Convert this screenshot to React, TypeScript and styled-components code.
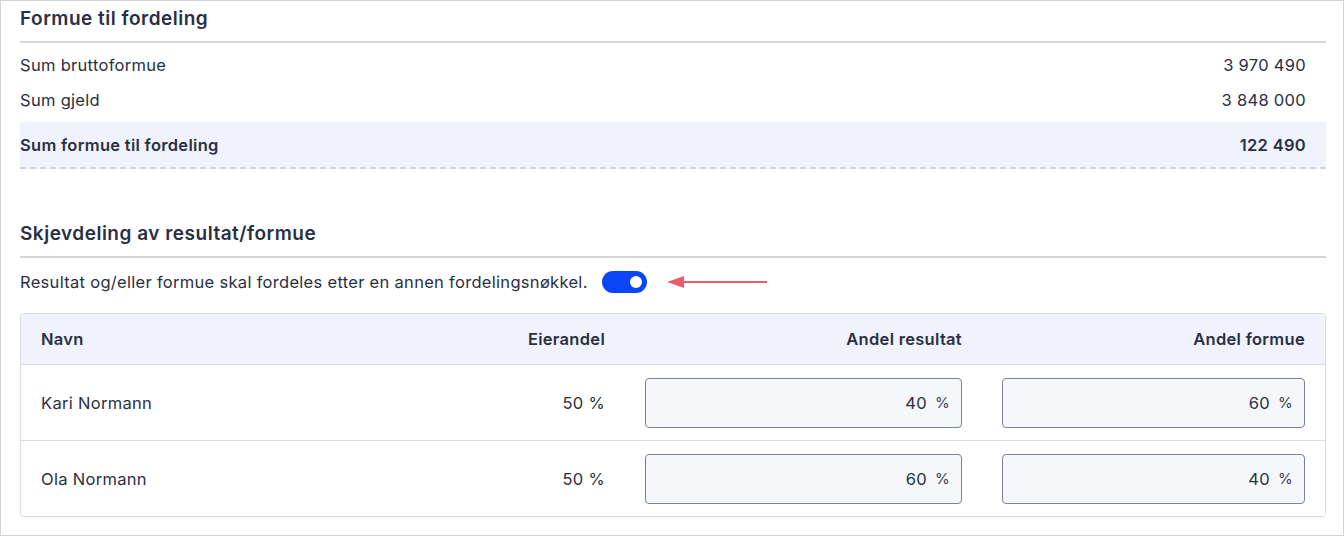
import styled, { createGlobalStyle } from "styled-components";

const GlobalStyle = createGlobalStyle`
  html, body {
    margin: 0;
    padding: 0;
    background: #ffffff;
  }
  body {
    font-family: Inter, "Noto Sans", "Liberation Sans", sans-serif;
    color: #2a3042;
    letter-spacing: 0.3px;
  }
`;

const Page = styled.div`
  box-sizing: border-box;
  width: 1344px;
  height: 536px;
  border: 1px solid #d3d3d6;
  padding: 0 17px 0 19px;
`;

const SectionTitle = styled.h2<{ $top: number }>`
  margin: ${(p) => p.$top}px 0 0;
  padding-bottom: 10px;
  border-bottom: 2px solid #d5d5da;
  font-size: 19px;
  font-weight: 600;
  letter-spacing: 0.5px;
  line-height: 24px;
`;

const SumRow = styled.div<{ $total?: boolean }>`
  display: flex;
  justify-content: space-between;
  align-items: center;
  padding: 0 20px 0 0;
  height: ${(p) => (p.$total ? "45px" : "35px")};
  font-size: 16.5px;
  font-weight: ${(p) => (p.$total ? 600 : 400)};
  background: ${(p) => (p.$total ? "#f0f3fd" : "transparent")};
  border-bottom: ${(p) => (p.$total ? "2px dashed #d3d3d8" : "none")};
  margin-top: ${(p) => (p.$total ? "5px" : "0")};
`;

const Rows = styled.div`
  padding-top: 4px;
`;

const ToggleLine = styled.div`
  display: flex;
  align-items: center;
  gap: 14px;
  height: 48px;
  font-size: 16.5px;
`;

const Switch = styled.span<{ $on: boolean }>`
  display: inline-flex;
  align-items: center;
  justify-content: ${(p) => (p.$on ? "flex-end" : "flex-start")};
  box-sizing: border-box;
  width: 45px;
  height: 22px;
  padding: 0 5px;
  border-radius: 11px;
  background: ${(p) => (p.$on ? "#0a46f5" : "#b8bcc8")};
  &::after {
    content: "";
    width: 12px;
    height: 12px;
    border-radius: 50%;
    background: #ffffff;
  }
`;

const Arrow = styled.svg`
  margin-left: 6px;
`;

const Table = styled.div`
  margin-top: 7px;
  border: 1px solid #d8dbe4;
  border-radius: 4px;
  overflow: hidden;
`;

const Grid = styled.div<{ $head?: boolean }>`
  display: grid;
  grid-template-columns: 283px 321px 357px 1fr;
  align-items: center;
  height: ${(p) => (p.$head ? "50px" : "75px")};
  background: ${(p) => (p.$head ? "#f0f3fd" : "#ffffff")};
  font-size: 16.5px;
  font-weight: ${(p) => (p.$head ? 600 : 400)};
  & + & {
    border-top: 1px solid #d8dbe4;
  }
`;

const Cell = styled.div<{ $right?: boolean }>`
  padding: 0 20px;
  text-align: ${(p) => (p.$right ? "right" : "left")};
`;

const PercentBox = styled.div`
  display: flex;
  justify-content: flex-end;
  align-items: center;
  gap: 8px;
  box-sizing: border-box;
  height: 50px;
  padding: 0 11px;
  background: #f5f7fb;
  border: 1px solid #7d8291;
  border-radius: 4px;
  font-size: 16.5px;
`;

const Unit = styled.span`
  font-size: 15px;
  color: #3a4050;
`;

const owners = [
  { name: "Kari Normann", share: 50, result: 40, wealth: 60 },
  { name: "Ola Normann", share: 50, result: 60, wealth: 40 },
];

const App = () => {
  return (
    <>
      <GlobalStyle />
      <Page>
        <SectionTitle $top={6}>Formue til fordeling</SectionTitle>
        <Rows>
          <SumRow>
            <span>Sum bruttoformue</span>
            <span>3 970 490</span>
          </SumRow>
          <SumRow>
            <span>Sum gjeld</span>
            <span>3 848 000</span>
          </SumRow>
          <SumRow $total>
            <span>Sum formue til fordeling</span>
            <span>122 490</span>
          </SumRow>
        </Rows>

        <SectionTitle $top={53}>Skjevdeling av resultat/formue</SectionTitle>
        <ToggleLine>
          <span>Resultat og/eller formue skal fordeles etter en annen fordelingsnøkkel.</span>
          <Switch $on={true} />
          <Arrow width="102" height="14" viewBox="0 0 102 14">
            <path d="M0 7 L17 1 L17 13 Z" fill="#e85c6b" />
            <line x1="14" y1="7" x2="100" y2="7" stroke="#e85c6b" strokeWidth="2" />
          </Arrow>
        </ToggleLine>

        <Table>
          <Grid $head>
            <Cell>Navn</Cell>
            <Cell $right>Eierandel</Cell>
            <Cell $right>Andel resultat</Cell>
            <Cell $right>Andel formue</Cell>
          </Grid>
          {owners.map((o) => (
            <Grid key={o.name}>
              <Cell>{o.name}</Cell>
              <Cell $right>{o.share} %</Cell>
              <Cell>
                <PercentBox>
                  <span>{o.result}</span>
                  <Unit>%</Unit>
                </PercentBox>
              </Cell>
              <Cell>
                <PercentBox>
                  <span>{o.wealth}</span>
                  <Unit>%</Unit>
                </PercentBox>
              </Cell>
            </Grid>
          ))}
        </Table>
      </Page>
    </>
  );
};

export default App;
